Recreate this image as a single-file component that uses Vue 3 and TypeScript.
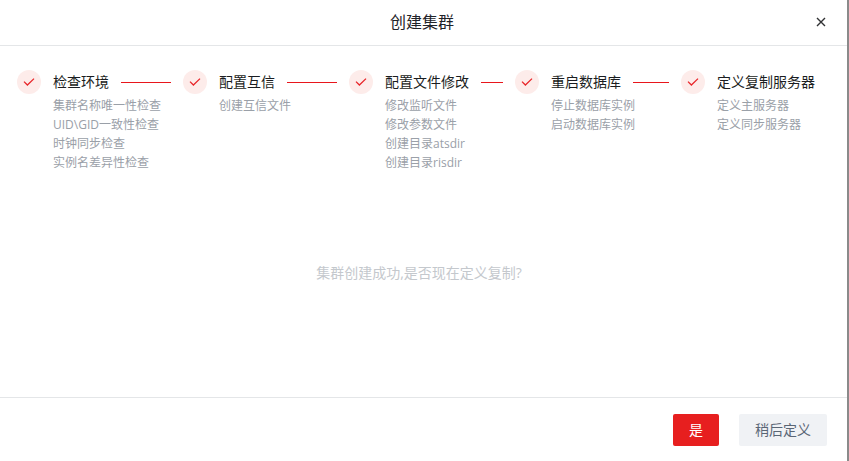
<script setup lang="ts">
interface Step {
  title: string
  items: string[]
}
const steps: Step[] = [
  { title: '检查环境', items: ['集群名称唯一性检查', 'UID\\GID一致性检查', '时钟同步检查', '实例名差异性检查'] },
  { title: '配置互信', items: ['创建互信文件'] },
  { title: '配置文件修改', items: ['修改监听文件', '修改参数文件', '创建目录atsdir', '创建目录risdir'] },
  { title: '重启数据库', items: ['停止数据库实例', '启动数据库实例'] },
  { title: '定义复制服务器', items: ['定义主服务器', '定义同步服务器'] },
]
</script>

<template>
  <div class="page">
    <div class="dialog">
      <header class="head">
        <span class="head-title">创建集群</span>
        <svg class="close" width="10" height="10" viewBox="0 0 10 10" aria-label="关闭">
          <path d="M1 1 L9 9 M9 1 L1 9" stroke="#303133" stroke-width="1.4" fill="none" />
        </svg>
      </header>
      <main class="body">
        <div class="steps">
          <div v-for="(s, i) in steps" :key="s.title" class="step" :class="{ last: i === steps.length - 1 }">
            <div class="badge">
              <svg width="12" height="10" viewBox="0 0 12 10">
                <path d="M1 4.6 L4.4 8 L11 1.6" stroke="#e8262a" stroke-width="1.3" fill="none" />
              </svg>
            </div>
            <div class="info">
              <div class="title-row">
                <span class="title">{{ s.title }}</span>
                <span v-if="i < steps.length - 1" class="line"></span>
              </div>
              <div v-for="item in s.items" :key="item" class="item">{{ item }}</div>
            </div>
          </div>
        </div>
        <p class="message">集群创建成功,是否现在定义复制?</p>
      </main>
      <footer class="foot">
        <button class="btn primary">是</button>
        <button class="btn plain">稍后定义</button>
      </footer>
    </div>
  </div>
</template>

<style>
html, body { margin: 0; background: #fff; }
</style>

<style scoped>
.page {
  width: 849px;
  height: 461px;
  background: #8a8a8a;
  overflow: hidden;
  font-family: "Open Sans", "Noto Sans CJK SC", sans-serif;
}
.dialog {
  width: 847px;
  height: 461px;
  background: #fff;
  display: flex;
  flex-direction: column;
}
.head {
  height: 41px;
  padding-bottom: 4px;
  box-sizing: content-box;
  border-bottom: 1px solid #e4e6e8;
  display: flex;
  align-items: center;
  justify-content: center;
  position: relative;
}
.head-title {
  font-size: 16px;
  color: #1f2329;
  margin-right: 3px;
}
.close {
  position: absolute;
  right: 21px;
  top: 17px;
}
.body {
  flex: 1;
  min-height: 0;
  padding: 24px 0 0 17px;
  position: relative;
}
.steps {
  display: flex;
}
.step {
  width: 166px;
  display: flex;
  flex: none;
}
.step.last {
  width: 140px;
}
.badge {
  width: 24px;
  height: 24px;
  border-radius: 50%;
  background: #fdecea;
  display: flex;
  align-items: center;
  justify-content: center;
  flex: none;
  margin-right: 12px;
}
.info {
  flex: 1;
  min-width: 0;
}
.title-row {
  display: flex;
  align-items: center;
  height: 24px;
  margin-bottom: 2px;
}
.title {
  font-size: 14px;
  color: #1a1d21;
  white-space: nowrap;
  margin-bottom: 2px;
}
.line {
  flex: 1;
  height: 1px;
  background: #e8161c;
  margin: 0 12px;
}
.item {
  font-size: 12px;
  line-height: 19px;
  color: #9aa0a8;
  white-space: nowrap;
}
.message {
  margin: 0;
  position: absolute;
  left: 0;
  right: 0;
  top: 217px;
  text-align: center;
  font-size: 14px;
  line-height: 20px;
  color: #c4c8cd;
  padding-right: 9px;
}
.foot {
  height: 63px;
  border-top: 1px solid #e4e6e8;
  display: flex;
  align-items: center;
  justify-content: flex-end;
  gap: 20px;
  padding: 0 20px;
}
.btn {
  height: 32px;
  border: 0;
  border-radius: 2px;
  font-size: 14px;
  font-family: inherit;
  padding: 0 0 2px;
}
.primary {
  width: 46px;
  background: #e71f1f;
  color: #fff;
}
.plain {
  width: 88px;
  background: #f0f2f5;
  color: #5a6675;
}
</style>
